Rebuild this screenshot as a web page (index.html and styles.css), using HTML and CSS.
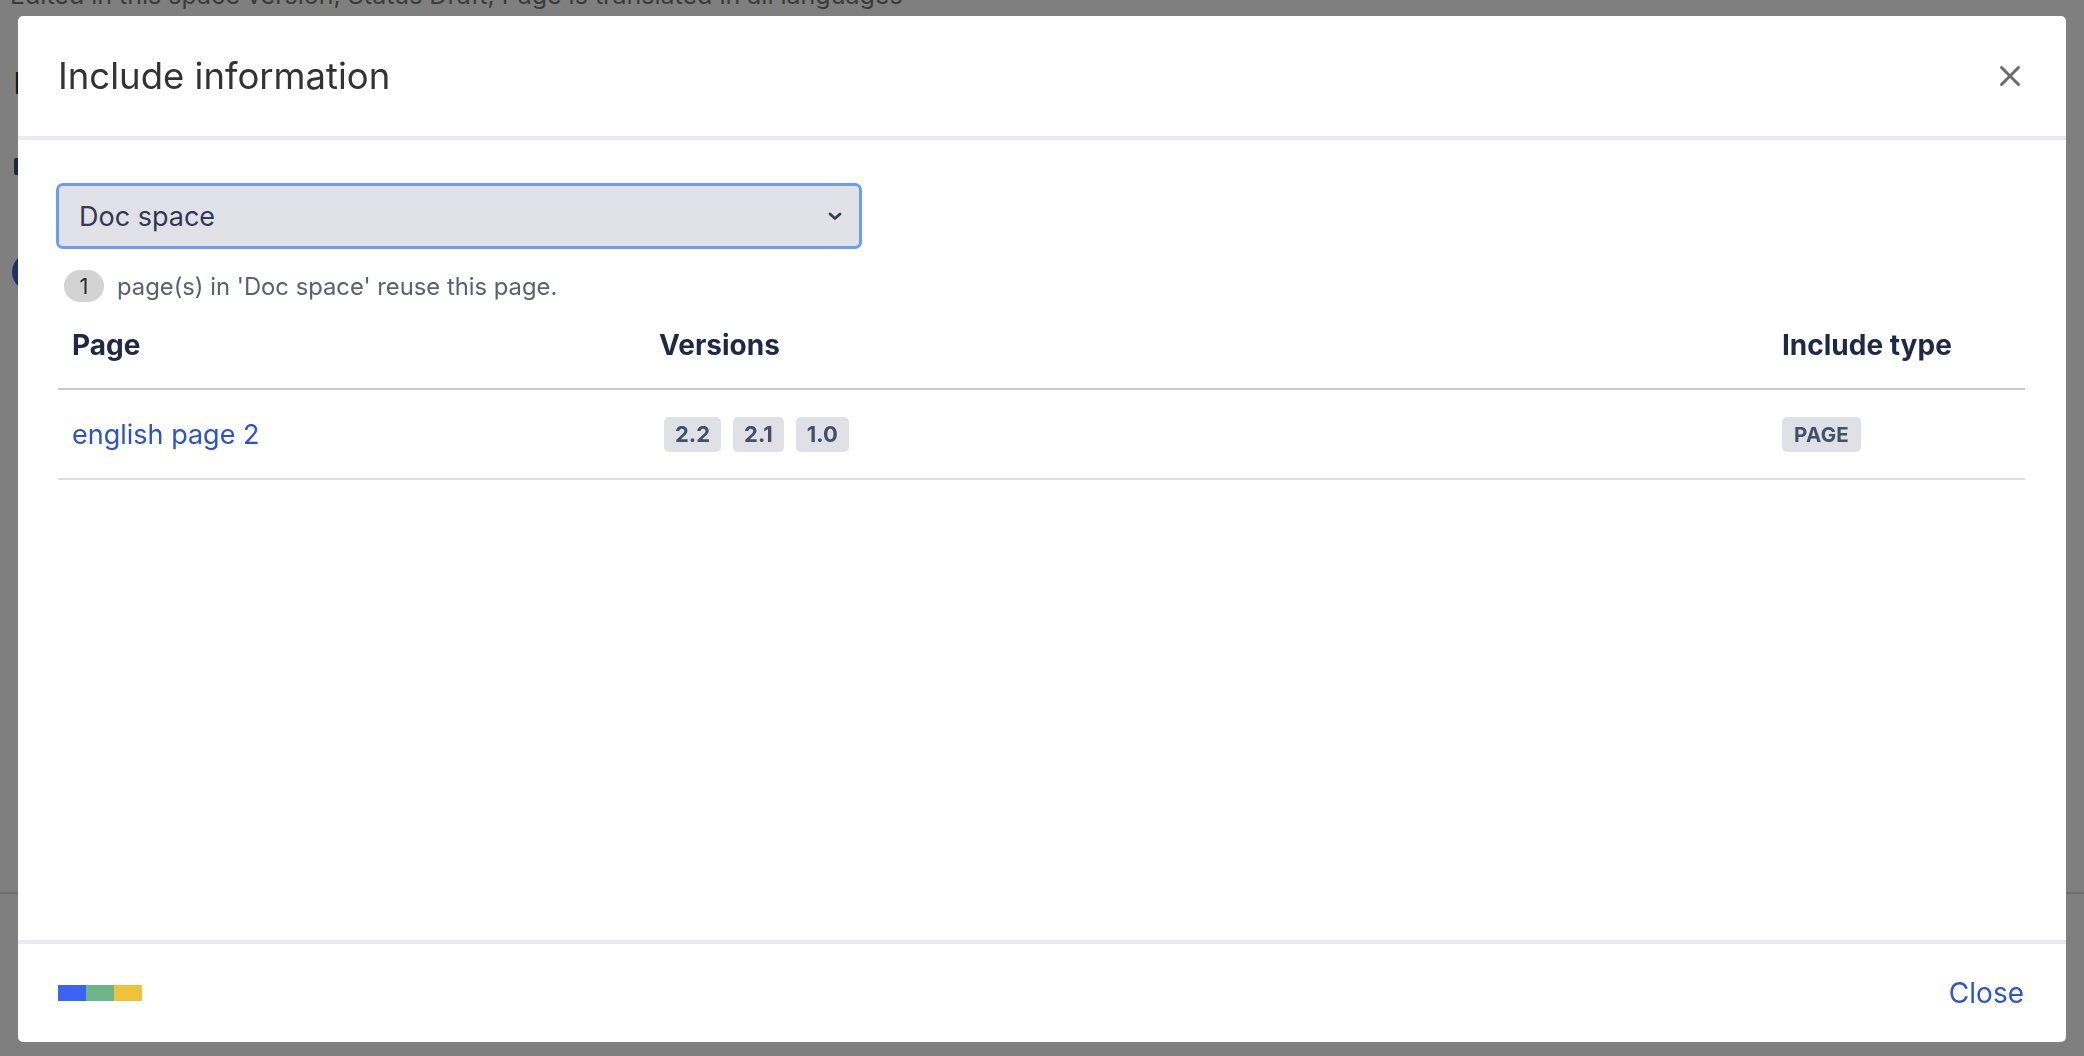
FILE: index.html
```html
<!DOCTYPE html>
<html lang="en">
<head>
<meta charset="utf-8">
<title>Include information</title>
<link rel="stylesheet" href="styles.css">
</head>
<body>
  <div class="page">
    <p class="page-meta">Edited in this space version, Status Draft, Page is translated in all languages</p>
    <h2 class="page-heading">Linked pages</h2>
    <div class="page-icon"></div>
    <div class="page-avatar"></div>
    <hr class="page-rule">
  </div>
  <div class="overlay"></div>

  <div class="dialog" role="dialog" aria-labelledby="dlg-title">
    <header class="dialog-header">
      <h1 id="dlg-title" class="dialog-title">Include information</h1>
      <button class="icon-close" aria-label="Close">
        <svg width="22" height="22" viewBox="0 0 22 22"><path d="M2.5 2.5 L19.5 19.5 M19.5 2.5 L2.5 19.5" stroke="#6b6b6b" stroke-width="3" stroke-linecap="round" fill="none"/></svg>
      </button>
    </header>

    <main class="dialog-body">
      <div class="space-select">
        <span>Doc space</span>
        <svg class="chevron" width="14" height="9" viewBox="0 0 14 9"><path d="M2 2 L7 6.5 L12 2" stroke="#363d55" stroke-width="2.8" stroke-linecap="round" stroke-linejoin="round" fill="none"/></svg>
      </div>

      <div class="reuse-info">
        <span class="count-badge">1</span>
        <span class="reuse-text">page(s) in 'Doc space' reuse this page.</span>
      </div>

      <div class="table">
        <div class="th">Page</div>
        <div class="th">Versions</div>
        <div class="th">Include type</div>

        <div class="td"><a class="page-link" href="#">english page 2</a></div>
        <div class="td versions">
          <span class="chip">2.2</span>
          <span class="chip">2.1</span>
          <span class="chip">1.0</span>
        </div>
        <div class="td"><span class="chip chip-type">PAGE</span></div>
      </div>
    </main>

    <footer class="dialog-footer">
      <div class="brand">
        <span class="brand-blue"></span><span class="brand-green"></span><span class="brand-yellow"></span>
      </div>
      <a class="close-link" href="#">Close</a>
    </footer>
  </div>
</body>
</html>
```

FILE: styles.css
```css
html, body {
  margin: 0;
  padding: 0;
  height: 100%;
  overflow: hidden;
}

body {
  background: #ffffff;
  font-family: "Inter", "Noto Sans", "Liberation Sans", sans-serif;
}

/* underlying page */
.page {
  padding-left: 14px;
}

.page-meta {
  margin: -20px 0 0 -4px;
  font-size: 25px;
  line-height: 30px;
  color: #777777;
  white-space: nowrap;
}

.page-heading {
  margin: 60px 0 0 0;
  font-size: 30px;
  line-height: 26px;
  font-weight: 700;
  color: #172b4d;
}

.page-icon {
  margin-top: 62px;
  width: 6px;
  height: 17px;
  border-radius: 2px;
  background: #42526e;
}

.page-avatar {
  margin-top: 78px;
  margin-left: -2px;
  width: 38px;
  height: 38px;
  border-radius: 50%;
  background: #3c5fdc;
}

.page-rule {
  margin: 601px 0 0 -14px;
  border: 0;
  height: 2px;
  background: #dedede;
  width: 2084px;
}

.overlay {
  position: fixed;
  inset: 0;
  background: rgba(0, 0, 0, 0.5);
}

/* dialog */
.dialog {
  position: fixed;
  left: 18px;
  top: 16px;
  width: 2048px;
  height: 1026px;
  background: #ffffff;
  border-radius: 5px;
  display: flex;
  flex-direction: column;
  overflow: hidden;
}

.dialog-header {
  height: 120px;
  flex: none;
  padding: 0 45px 0 40px;
  display: flex;
  align-items: center;
  justify-content: space-between;
  border-bottom: 4px solid #e9eaf1;
}

.dialog-title {
  margin: 0;
  font-size: 36.5px;
  font-weight: 400;
  letter-spacing: 0;
  color: #333333;
}

.icon-close {
  border: 0;
  background: none;
  padding: 0;
  width: 22px;
  height: 22px;
  display: flex;
  cursor: pointer;
}

.dialog-body {
  flex: 1;
  padding: 0 41px 0 40px;
}

.space-select {
  margin: 43px 0 0 -2px;
  box-sizing: border-box;
  width: 806px;
  height: 66px;
  border: 3px solid #6a9bf7;
  border-radius: 7px;
  background: #e1e2e7;
  padding: 0 17px 0 20px;
  display: flex;
  align-items: center;
  justify-content: space-between;
  font-size: 27px;
  color: #313954;
}

.reuse-info {
  margin-top: 21px;
  display: flex;
  align-items: center;
  padding-left: 6px;
}

.count-badge {
  width: 40px;
  height: 32px;
  border-radius: 16px;
  background: #d3d3d3;
  color: #2b2b2b;
  font-size: 22px;
  display: flex;
  align-items: center;
  justify-content: center;
}

.reuse-text {
  margin-left: 13px;
  font-size: 23.8px;
  color: #5a6078;
}

.table {
  margin-top: 4px;
  display: grid;
  grid-template-columns: 587px 1123px 1fr;
}

.th {
  padding: 23px 14px 27px;
  line-height: 32px;
  font-size: 28px;
  font-weight: 700;
  color: #1f2846;
  border-bottom: 2px solid #c9c9c9;
  letter-spacing: 0;
}

.td {
  height: 88px;
  padding: 0 14px;
  display: flex;
  align-items: center;
  border-bottom: 2px solid #dedede;
}

.page-link {
  font-size: 27px;
  color: #2b52d4;
  text-decoration: none;
}

.versions {
  gap: 12px;
}

.versions .chip:first-child {
  margin-left: 5px;
}

.chip {
  height: 35px;
  box-sizing: border-box;
  padding: 0 11px;
  border-radius: 5px;
  background: #dfe1e6;
  color: #42506c;
  font-size: 22px;
  font-weight: 700;
  display: inline-flex;
  align-items: center;
}

.chip-type {
  font-size: 20.5px;
  padding: 0 12px;
  letter-spacing: 0.3px;
}

.dialog-footer {
  height: 98px;
  flex: none;
  border-top: 4px solid #e9eaf1;
  padding: 0 42px 0 40px;
  display: flex;
  align-items: center;
  justify-content: space-between;
}

.brand {
  display: flex;
}

.brand span {
  width: 28px;
  height: 16px;
}

.brand-blue { background: #3c62f6; }
.brand-green { background: #6db68a; }
.brand-yellow { background: #f0c13a; }

.close-link {
  font-size: 28px;
  color: #2c55d2;
  text-decoration: none;
}
```
